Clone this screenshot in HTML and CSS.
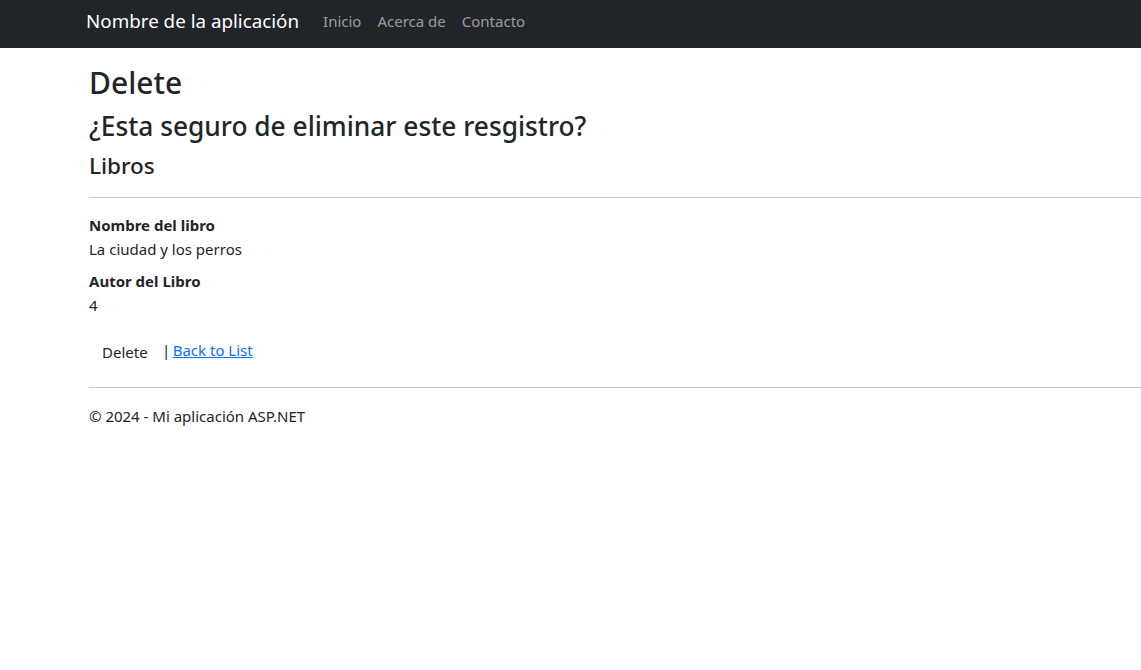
FILE: index.html
```html
<!DOCTYPE html>
<html lang="es">
<head>
<meta charset="utf-8">
<title>Delete</title>
<link rel="stylesheet" href="styles.css">
</head>
<body>
<nav class="navbar">
  <div class="nav-inner">
    <a class="brand" href="#">Nombre de la aplicación</a>
    <ul class="nav-links">
      <li><a href="#">Inicio</a></li>
      <li><a href="#">Acerca de</a></li>
      <li><a href="#">Contacto</a></li>
    </ul>
  </div>
</nav>
<div class="body-content">
  <h2 class="h-delete">Delete</h2>
  <h3 class="h-confirm">¿Esta seguro de eliminar este resgistro?</h3>
  <div>
    <h4 class="h-libros">Libros</h4>
    <hr class="rule rule-top">
    <dl class="details">
      <dt>Nombre del libro</dt>
      <dd>La ciudad y los perros</dd>
      <dt>Autor del Libro</dt>
      <dd>4</dd>
    </dl>
    <form class="actions">
      <button type="button" class="btn">Delete</button> |
      <a class="link" href="#">Back to List</a>
    </form>
  </div>
  <hr class="rule">
  <footer class="footer">
    <p>© 2024 - Mi aplicación ASP.NET</p>
  </footer>
</div>
</body>
</html>
```

FILE: styles.css
```css
* { box-sizing: border-box; }
html, body { margin: 0; padding: 0; }
body {
  font-family: "Noto Sans", "Open Sans", "Liberation Sans", sans-serif;
  font-size: 15px;
  line-height: 24px;
  color: #212529;
  background: #fff;
}
.navbar {
  background: #212529;
  height: 48px;
  margin-bottom: 16px;
}
.nav-inner {
  display: flex;
  align-items: center;
  height: 41px;
  padding-left: 86px;
}
.brand {
  color: #fff;
  text-decoration: none;
  font-size: 18.8px;
  line-height: 30px;
  margin-right: 16px;
}
.nav-links {
  display: flex;
  list-style: none;
  margin: 0;
  padding: 0;
}
.nav-links a {
  display: block;
  color: rgba(255,255,255,.55);
  text-decoration: none;
  padding: 8px 8px;
}
.body-content {
  padding-left: 89px;
}
h2, h3, h4 {
  margin: 0 0 8px;
  font-weight: 500;
}
.h-delete { font-size: 30px; line-height: 38.4px; }
.h-confirm { font-size: 26.3px; line-height: 33.6px; }
.h-libros { font-size: 22.5px; line-height: 28.8px; }
.rule {
  margin: 16px 0;
  border: 0;
  border-top: 1px solid #c8c9ca;
  height: 0;
}
.rule-top { margin-bottom: 15px; }
.details { margin: 0 0 16px; }
.details dt { font-weight: 700; }
.details dd { margin: 0 0 8px; }
.actions { margin: 0; word-spacing: -1.5px; }
.btn {
  display: inline-block;
  font-family: inherit;
  font-size: 15px;
  line-height: 24px;
  padding: 6px 11px 6px 12px;
  border: 1px solid transparent;
  background: transparent;
  color: #212529;
  vertical-align: middle;
  border-radius: 6px;
}
.link { color: #0d6efd; text-decoration: underline; word-spacing: normal; }
.footer p { margin: 0 0 16px; }
```
